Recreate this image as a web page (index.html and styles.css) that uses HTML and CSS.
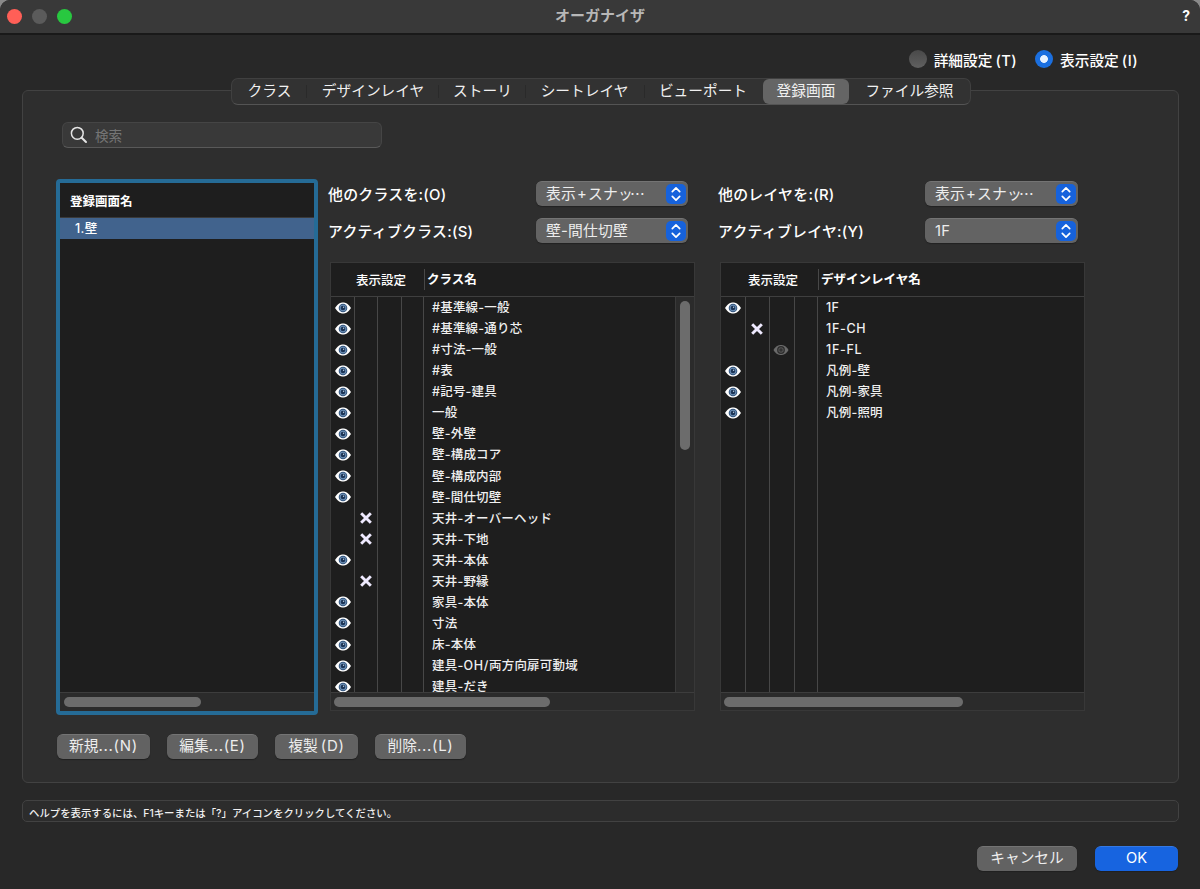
FILE: index.html
```html
<!DOCTYPE html>
<html lang="ja">
<head>
    <meta charset="UTF-8">
    <title>オーガナイザ</title>
    <link rel="stylesheet" href="styles.css">
</head>
<body>
<svg width="0" height="0" class="defs">
    <symbol id="eye" viewBox="0 0 16 12">
        <path d="M0 6C3 1.600 5.400.5 8 .5S13 1.600 16 6c-3 4.400-5.400 5.500-8 5.500S3 10.400 0 6z" fill="#fff"/>
        <circle cx="8" cy="6" r="4.300" fill="#35567e"/>
        <circle cx="8" cy="6" r="3.300" fill="#6c90b8"/>
        <circle cx="8" cy="6" r="2.300" fill="#1c3557"/>
        <circle cx="8.600" cy="5.200" r=".7" fill="#b9cde2"/>
    </symbol>
    <symbol id="gray-eye" viewBox="0 0 16 12">
        <path d="M.5 6C3 1.900 5.400 1 8 1s5 .9 7.500 5c-2.500 4.100-5 5-7.500 5S3 10.100.5 6z" fill="#6a6a6a"/>
        <circle cx="8" cy="6" r="3.900" fill="#2c2c2c"/>
        <circle cx="8" cy="6" r="2.700" fill="#555"/>
        <circle cx="8" cy="6" r="1.700" fill="#333"/>
    </symbol>
    <symbol id="cross" viewBox="0 0 12 12">
        <path d="M2.200 2.200l7.600 7.600M9.800 2.200l-7.600 7.600" stroke="#efeaff" stroke-width="2.900" stroke-linecap="square"/>
    </symbol>
    <symbol id="updown" viewBox="0 0 20 20">
        <path d="M6.300 7.700L10 3.900l3.700 3.800M6.300 12.300l3.700 3.800 3.700-3.800" fill="none" stroke="#fff" stroke-width="1.700" stroke-linecap="round" stroke-linejoin="round"/>
    </symbol>
</svg>
<div class="window">
    <div class="titlebar">
        <div class="lights"><i class="red"></i><i class="gray"></i><i class="green"></i></div>
        <h1>オーガナイザ</h1>
        <span class="help">?</span>
    </div>

    <div class="modes">
        <label><i class="radio"></i>詳細設定<span class="key">(T)</span></label>
        <label><i class="radio on"></i>表示設定<span class="key">(I)</span></label>
    </div>

    <div class="tabs">
        <span>クラス</span>
        <span>デザインレイヤ</span>
        <span>ストーリ</span>
        <span>シートレイヤ</span>
        <span>ビューポート</span>
        <span class="current">登録画面</span>
        <span>ファイル参照</span>
    </div>

    <div class="panel">
        <div class="search">
            <svg width="18" height="18" viewBox="0 0 18 18"><circle cx="7.300" cy="7.300" r="5.900" fill="none" stroke="#e4e4e4" stroke-width="1.500"/><path d="M11.700 11.700l4.300 4.300" stroke="#e4e4e4" stroke-width="2" stroke-linecap="round"/></svg>
            <span>検索</span>
        </div>

        <div class="main">
            <div class="views">
                <div class="views-head">登録画面名</div>
                <div class="views-body"><div class="selected">1.壁</div></div>
                <div class="hscroll"><i class="thumb-views"></i></div>
            </div>

            <div class="column">
                <div class="field"><span>他のクラスを:(O)</span><div class="select">表示<b>+</b>スナッ<em>…</em><svg><use href="#updown"/></svg></div></div>
                <div class="field"><span>アクティブクラス:(S)</span><div class="select">壁-間仕切壁<svg><use href="#updown"/></svg></div></div>
                <div class="list classes">
                    <div class="head"><span>表示設定</span><strong>クラス名</strong></div>
                    <div class="middle">
                        <div class="rows">
                            <div class="row"><svg class="c1"><use href="#eye"/></svg><span>#基準線-一般</span></div>
                            <div class="row"><svg class="c1"><use href="#eye"/></svg><span>#基準線-通り芯</span></div>
                            <div class="row"><svg class="c1"><use href="#eye"/></svg><span>#寸法-一般</span></div>
                            <div class="row"><svg class="c1"><use href="#eye"/></svg><span>#表</span></div>
                            <div class="row"><svg class="c1"><use href="#eye"/></svg><span>#記号-建具</span></div>
                            <div class="row"><svg class="c1"><use href="#eye"/></svg><span>一般</span></div>
                            <div class="row"><svg class="c1"><use href="#eye"/></svg><span>壁-外壁</span></div>
                            <div class="row"><svg class="c1"><use href="#eye"/></svg><span>壁-構成コア</span></div>
                            <div class="row"><svg class="c1"><use href="#eye"/></svg><span>壁-構成内部</span></div>
                            <div class="row"><svg class="c1"><use href="#eye"/></svg><span>壁-間仕切壁</span></div>
                            <div class="row"><svg class="c2"><use href="#cross"/></svg><span>天井-オーバーヘッド</span></div>
                            <div class="row"><svg class="c2"><use href="#cross"/></svg><span>天井-下地</span></div>
                            <div class="row"><svg class="c1"><use href="#eye"/></svg><span>天井-本体</span></div>
                            <div class="row"><svg class="c2"><use href="#cross"/></svg><span>天井-野縁</span></div>
                            <div class="row"><svg class="c1"><use href="#eye"/></svg><span>家具-本体</span></div>
                            <div class="row"><svg class="c1"><use href="#eye"/></svg><span>寸法</span></div>
                            <div class="row"><svg class="c1"><use href="#eye"/></svg><span>床-本体</span></div>
                            <div class="row"><svg class="c1"><use href="#eye"/></svg><span>建具-<u>OH/</u>両方向扉可動域</span></div>
                            <div class="row last"><svg class="c1"><use href="#eye"/></svg><span>建具-だき</span></div>
                        </div>
                        <div class="vscroll"><i></i></div>
                    </div>
                    <div class="hscroll"><i class="thumb-classes"></i></div>
                </div>
            </div>

            <div class="column">
                <div class="field"><span>他のレイヤを:(R)</span><div class="select">表示<b>+</b>スナッ<em>…</em><svg><use href="#updown"/></svg></div></div>
                <div class="field"><span>アクティブレイヤ:(Y)</span><div class="select">1F<svg><use href="#updown"/></svg></div></div>
                <div class="list layers">
                    <div class="head"><span>表示設定</span><strong>デザインレイヤ名</strong></div>
                    <div class="middle">
                        <div class="rows">
                            <div class="row"><svg class="c1"><use href="#eye"/></svg><span>1F</span></div>
                            <div class="row"><svg class="c2"><use href="#cross"/></svg><span><u>1F-CH</u></span></div>
                            <div class="row"><svg class="c3"><use href="#gray-eye"/></svg><span><u>1F-FL</u></span></div>
                            <div class="row"><svg class="c1"><use href="#eye"/></svg><span>凡例-壁</span></div>
                            <div class="row"><svg class="c1"><use href="#eye"/></svg><span>凡例-家具</span></div>
                            <div class="row"><svg class="c1"><use href="#eye"/></svg><span>凡例-照明</span></div>
                        </div>
                    </div>
                    <div class="hscroll"><i class="thumb-layers"></i></div>
                </div>
            </div>
        </div>

        <div class="actions">
            <button class="btn new">新規<span>...(N)</span></button>
            <button class="btn edit">編集<span>...(E)</span></button>
            <button class="btn copy">複製<span class="key">(D)</span></button>
            <button class="btn del">削除<span>...(L)</span></button>
        </div>
    </div>

    <div class="hint">ヘルプを表示するには、F1キーまたは「?」アイコンをクリックしてください。</div>

    <div class="footer">
        <button class="btn cancel">キャンセル</button>
        <button class="btn ok">OK</button>
    </div>
</div>
</body>
</html>
```
FILE: styles.css
```css
*{
    margin:0;
    padding:0;
    box-sizing:border-box;
}
body{
    background:#8a8a8a;
    font-family:Inter,"Noto Sans CJK JP",sans-serif;
    font-size:14.700px;
    color:#f0f0f0;
    overflow:hidden;
}
i{
    display:block;
}
.defs{
    position:absolute;
}
.window{
    width:1200px;
    height:889px;
    background:#282828;
    border-radius:10px 10px 0 0;
    overflow:hidden;
}

/* title bar */
.titlebar{
    height:35px;
    background:#393939;
    border-bottom:2px solid #191919;
    display:grid;
    grid-template-columns:200px 1fr 200px;
    align-items:center;
}
.lights{
    display:flex;
    gap:10px;
    padding-left:7px;
    margin-top:-1px;
}
.lights i{
    width:15px;
    height:15px;
    border-radius:50%;
}
.red{
    background:#ff5f57;
}
.gray{
    background:#5b5b5b;
}
.green{
    background:#28c840;
}
.titlebar h1{
    font-size:15px;
    line-height:20px;
    font-weight:600;
    color:#b7b7b7;
    text-align:center;
    margin-top:-2px;
}
.help{
    text-align:right;
    padding-right:10px;
    font-weight:700;
    font-size:14px;
    color:#fff;
    margin-top:-2px;
}

/* radio buttons */
.modes{
    height:43px;
    padding:9px 62px 0 0;
    display:flex;
    justify-content:flex-end;
    align-items:center;
    gap:18px;
    font-weight:500;
    color:#fff;
}
.modes label{
    display:flex;
    align-items:center;
    line-height:20px;
}
.key{
    margin-left:3px;
    letter-spacing:.4px;
}
.radio{
    width:18px;
    height:18px;
    margin:-4px 7px 0 0;
    border-radius:50%;
    background:linear-gradient(#494949,#606060);
}
.radio.on{
    background:radial-gradient(circle,#e8f2ff 0 3.500px,#1b6fdf 4.300px);
}

/* tabs */
.tabs{
    position:relative;
    width:740px;
    height:27px;
    margin:0 auto -15px;
    left:1px;
    border:1px solid #404040;
    border-bottom-color:#545454;
    border-radius:7px;
    background:#323232;
    display:grid;
    grid-template-columns:75px 132px 87px 119px 118px 86px 121px;
}
.tabs span{
    text-align:center;
    line-height:25px;
    background:linear-gradient(#2a2a2a,#2a2a2a) no-repeat right 6px/1px 13px;
}
.tabs span:nth-child(4),
.tabs span:nth-child(5){
    padding-right:2px;
}
.tabs span:nth-child(5),
.tabs span:last-child{
    background:none;
}
.tabs .current{
    background:#656565;
    border-radius:6px;
    height:25px;
}

/* panel */
.panel{
    width:1157px;
    height:693px;
    margin-left:22px;
    padding:31px 0 0 33px;
    border:1px solid #424242;
    border-radius:6px;
    background:#2e2e2e;
}
.search{
    width:320px;
    height:26px;
    margin-left:6px;
    padding-left:7px;
    display:flex;
    align-items:center;
    background:#393939;
    border:1px solid #454545;
    border-bottom-color:#595959;
    border-radius:6px;
    color:#757575;
    font-size:13.600px;
}
.search span{
    margin-left:7px;
}
.main{
    display:flex;
    height:536px;
    margin-top:31px;
}
.views{
    width:262px;
    margin-right:12px;
    border:4px solid #256b96;
    border-radius:4px;
    background:#1e1e1e;
    display:flex;
    flex-direction:column;
}
.views-head{
    height:35px;
    padding:0 0 0 10px;
    line-height:37px;
    font-size:12.500px;
    font-weight:700;
    color:#fff;
    border-bottom:1px solid #3a3a3a;
}
.views-body{
    flex:1;
}
.selected{
    height:21px;
    padding-left:15px;
    line-height:21px;
    background:#41638d;
    color:#fff;
    font-size:12.500px;
    letter-spacing:.4px;
    font-weight:500;
}
.hscroll{
    height:19px;
    padding:4px 0 0 4px;
    background:#2b2b2b;
    border-top:1px solid #3d3d3d;
}
.list .hscroll{
    height:18px;
    padding-left:3px;
}
.hscroll i{
    height:10px;
    border-radius:5px;
    background:#6c6c6c;
}
.thumb-views{
    width:137px;
}
.thumb-classes{
    width:216px;
}
.thumb-layers{
    width:239px;
}

/* class and layer columns */
.column{
    width:365px;
    margin-right:25px;
    padding-top:2px;
}
.field{
    display:flex;
    justify-content:space-between;
    height:25px;
    margin:0 7px 12px -2px;
    line-height:29px;
    font-size:14.900px;
    letter-spacing:.25px;
    font-weight:500;
    color:#fff;
}
.select{
    width:152px;
    height:25px;
    padding:0 2px 0 10px;
    display:flex;
    align-items:center;
    line-height:24px;
    font-size:14.800px;
    letter-spacing:.2px;
    font-weight:400;
    color:#ededed;
    background:#636363;
    border-top:1px solid #747474;
    border-radius:6px;
    box-shadow:0 1px 1px #222;
}
.column:last-child .select{
    width:153px;
}
.select b{
    font-weight:400;
    width:12px;
    text-align:center;
}
.select em{
    font-style:normal;
    font-family:"Noto Sans CJK JP",sans-serif;
    margin-left:-3px;
}
.select svg{
    width:20px;
    height:20px;
    margin-left:auto;
    border-radius:5px;
    background:#1662dc;
}
.list{
    height:449px;
    margin-top:19px;
    border:1px solid #383838;
    background:#1e1e1e;
    display:flex;
    flex-direction:column;
}
.head{
    height:34px;
    border-bottom:1px solid #3f3f3f;
    display:flex;
    align-items:center;
    font-size:12.500px;
    color:#fff;
}
.head span{
    width:93px;
    padding-left:25px;
    font-weight:500;
    white-space:nowrap;
}
.head strong{
    line-height:21px;
    padding-left:2px;
    border-left:1px solid #484848;
}
.layers .head span{
    width:97px;
    padding-left:27px;
}
.middle{
    flex:1;
    min-height:0;
    display:flex;
}
.rows{
    flex:1;
    overflow:hidden;
    background:
        linear-gradient(#474747,#474747) 23px 0/1px 100% no-repeat,
        linear-gradient(#474747,#474747) 46px 0/1px 100% no-repeat,
        linear-gradient(#474747,#474747) 70px 0/1px 100% no-repeat,
        linear-gradient(#474747,#474747) 92px 0/1px 100% no-repeat;
}
.layers .rows{
    background-position:24px 0,48px 0,73px 0,96px 0;
}
.row{
    height:21.070px;
    display:grid;
    grid-template-columns:24px 23px 23px 31px 1fr;
    align-items:center;
    line-height:21px;
    font-size:12.500px;
    letter-spacing:.2px;
    font-weight:500;
    white-space:nowrap;
}
/* cut by the bottom of the list */
.row.last{
    height:16px;
    line-height:16px;
    padding-top:3px;
}
.row u{
    text-decoration:none;
    letter-spacing:.7px;
}
.layers .row{
    grid-template-columns:24px 24px 24px 33px 1fr;
}
.row svg{
    width:16px;
    height:12px;
    grid-row:1;
    justify-self:center;
}
.row .c1{
    grid-column:1;
}
.row .c2{
    grid-column:2;
    margin-right:1px;
}
.row .c3{
    grid-column:3;
}
.row span{
    grid-column:5;
    grid-row:1;
}
.vscroll{
    width:19px;
    padding:4px 0 0 4px;
    background:#2b2b2b;
    border-left:1px solid #3a3a3a;
}
.vscroll i{
    width:10px;
    height:149px;
    border-radius:5px;
    background:#6c6c6c;
}

/* buttons */
.actions{
    display:flex;
    margin:19px 0 0 1px;
}
.btn{
    height:25px;
    padding-bottom:2px;
    border:0;
    border-top:1px solid #747474;
    border-radius:6px;
    background:#626262;
    box-shadow:0 1px 1px #202020;
    color:#ededed;
    font-family:inherit;
    font-size:14.700px;
    line-height:21px;
    white-space:nowrap;
}
.actions span{
    font-size:15px;
    letter-spacing:.7px;
}
.new{
    width:93px;
    margin-right:17px;
}
.edit{
    width:91px;
    margin-right:17px;
}
.copy{
    width:83px;
    margin-right:17px;
}
.del{
    width:91px;
}
.hint{
    width:1157px;
    height:22px;
    margin:17px 0 0 22px;
    padding:2px 0 0 6px;
    border:1px solid #424242;
    border-radius:5px;
    background:#2c2c2c;
    font-size:10.400px;
    font-weight:500;
    line-height:21px;
}
.footer{
    display:flex;
    justify-content:flex-end;
    gap:18px;
    margin-top:24px;
    padding-right:22px;
}
.cancel{
    width:100px;
}
.ok{
    width:83px;
    background:#1764e0;
    border-color:#3479e4;
    color:#fff;
}
```
